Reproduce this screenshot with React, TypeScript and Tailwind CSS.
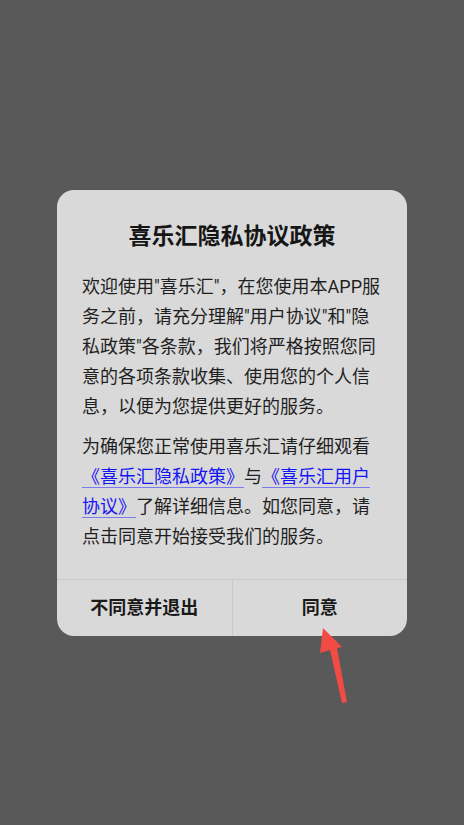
import React from "react";

const PrivacyDialog = () => {
  return (
    <div
      className="relative h-[825px] w-full bg-[#595959] flex items-center justify-center [text-spacing-trim:space-all]"
      style={{ fontFamily: 'Roboto, "Noto Sans CJK SC", sans-serif' }}
    >
      <div className="w-[350px] rounded-[17px] bg-[#d9d9d9] overflow-hidden">
        <div className="px-[25px] pt-[32px] pb-[27px]">
          <h1 className="text-center text-[23px] leading-[30px] font-bold text-[#161616]">
            喜乐汇隐私协议政策
          </h1>
          <p className="mt-[20px] text-[18px] leading-[30px] text-[#1f1f1f]">
            欢迎使用"喜乐汇"，在您使用本APP服务之前，请充分理解"用户协议"和"隐私政策"各条款，我们将严格按照您同意的各项条款收集、使用您的个人信息，以便为您提供更好的服务。
          </p>
          <p className="mt-[10px] text-[18px] leading-[30px] text-[#1f1f1f]">
            为确保您正常使用喜乐汇请仔细观看
            <a className="text-[#1414f5] underline decoration-[#7a7af0] underline-offset-[4px]">
              《喜乐汇隐私政策》
            </a>
            与
            <a className="text-[#1414f5] underline decoration-[#7a7af0] underline-offset-[4px]">
              《喜乐汇用户协议》
            </a>
            了解详细信息。如您同意，请点击同意开始接受我们的服务。
          </p>
        </div>
        <div className="flex h-[57px] border-t border-[#c9c9c9]">
          <button className="flex-1 text-[18px] font-bold text-[#1a1a1a] border-r border-[#c9c9c9]">
            不同意并退出
          </button>
          <button className="flex-1 text-[18px] font-bold text-[#1a1a1a]">同意</button>
        </div>
      </div>

      {/* red pointer arrow */}
      <svg
        className="absolute left-[300px] top-[620px]"
        width="60"
        height="90"
        viewBox="0 0 60 90"
      >
        <polygon points="23,8 42,27 37,28 47,82 42,83 30,30 20,33" fill="#f24a45" />
      </svg>
    </div>
  );
};

export default function App() {
  return <PrivacyDialog />;
}
